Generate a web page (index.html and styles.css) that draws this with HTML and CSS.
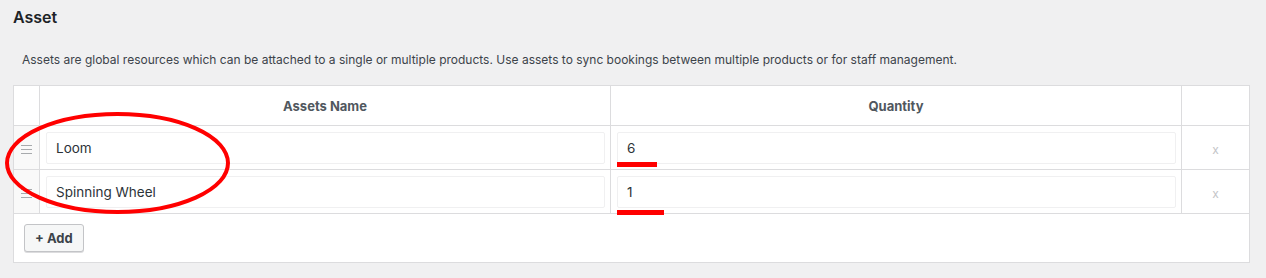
FILE: index.html
```html
<!DOCTYPE html>
<html lang="en">
<head>
  <meta charset="UTF-8">
  <title>Asset</title>
  <link rel="stylesheet" href="styles.css">
</head>
<body>
  <div class="wrap">
    <h2 class="title">Asset</h2>
    <p class="desc">Assets are global resources which can be attached to a single or multiple products. Use assets to sync bookings between multiple products or for staff management.</p>

    <div class="assets">
      <table class="asset-table">
        <thead>
          <tr>
            <th class="col-handle"></th>
            <th class="col-name">Assets Name</th>
            <th class="col-qty">Quantity</th>
            <th class="col-remove"></th>
          </tr>
        </thead>
        <tbody>
          <tr>
            <td class="col-handle"><span class="handle"></span></td>
            <td class="col-name"><input type="text" value="Loom"></td>
            <td class="col-qty"><input type="text" value="6"><span class="mark mark-1"></span></td>
            <td class="col-remove"><a href="#" class="remove">x</a></td>
          </tr>
          <tr>
            <td class="col-handle"><span class="handle"></span></td>
            <td class="col-name"><input type="text" value="Spinning Wheel"></td>
            <td class="col-qty"><input type="text" value="1"><span class="mark mark-2"></span></td>
            <td class="col-remove"><a href="#" class="remove">x</a></td>
          </tr>
        </tbody>
        <tfoot>
          <tr>
            <td colspan="4"><button type="button" class="btn-add">+ Add</button></td>
          </tr>
        </tfoot>
      </table>
      <!-- annotation circled around the names -->
      <svg class="circle" width="240" height="112" viewBox="0 0 240 112">
        <ellipse cx="112.5" cy="53" rx="110.5" ry="49" fill="none" stroke="#f00" stroke-width="4"/>
      </svg>
    </div>
  </div>
</body>
</html>
```

FILE: styles.css
```css
body {
  margin: 0;
  background: #f0f0f1;
  font-family: Inter, "Liberation Sans", Arial, sans-serif;
  color: #3c434a;
}
.wrap {
  padding: 0 16px 0 13px;
}
.title {
  margin: 0;
  padding-top: 7px;
  font-size: 16px;
  line-height: 20px;
  font-weight: 600;
  color: #1d2327;
}
.desc {
  margin: 24px 0 0 9px;
  font-size: 12px;
  line-height: 18px;
  color: #3c434a;
}
.assets {
  position: relative;
  margin-top: 16px;
}
.asset-table {
  width: 100%;
  border-collapse: collapse;
  background: #fff;
  border: 1px solid #dcdcde;
}
.asset-table th {
  height: 38px;
  padding: 1px 0 0;
  font-size: 13px;
  font-weight: 700;
  color: #50575e;
  text-align: center;
  border: 1px solid #dcdcde;
}
.asset-table td {
  padding: 6px 5px 5px 6px;
  height: 32px;
  border: 1px solid #dcdcde;
}
.asset-table .col-handle {
  width: 25px;
  background: #f9f9f9;
  text-align: center;
  padding: 0;
}
.asset-table th.col-handle {
  background: #fff;
}
.asset-table .col-remove {
  width: 67px;
  padding: 0;
  text-align: center;
}
.asset-table .col-name {
  width: 559px;
}
.asset-table td.col-qty {
  position: relative;
}
.handle {
  display: inline-block;
  width: 11px;
  height: 7px;
  border-top: 1px solid #a7aaad;
  border-bottom: 1px solid #a7aaad;
  position: relative;
  vertical-align: middle;
}
.handle::after {
  content: "";
  position: absolute;
  left: 0;
  right: 0;
  top: 3px;
  border-top: 1px solid #a7aaad;
}
.asset-table input {
  box-sizing: border-box;
  width: 100%;
  height: 32px;
  padding: 0 9px;
  border: 1px solid #f0f0f1;
  border-radius: 2px;
  font-family: inherit;
  font-size: 13.5px;
  color: #2c3338;
  background: #fff;
  outline: none;
}
.remove {
  color: #c3c4c7;
  font-size: 12px;
  text-decoration: none;
}
.asset-table tfoot td {
  height: 48px;
  padding: 0 0 0 10px;
}
.btn-add {
  height: 28px;
  padding: 0 10px;
  border: 1px solid #c3c4c7;
  border-radius: 3px;
  background: #f6f7f7;
  font-family: inherit;
  font-size: 13px;
  font-weight: 700;
  color: #3c434a;
  box-shadow: 0 1px 0 #dcdcde;
}
.mark {
  position: absolute;
  left: 6px;
  height: 5px;
  background: #f00;
}
.mark-1 {
  bottom: 2px;
  width: 40px;
}
.mark-2 {
  bottom: -2px;
  width: 47px;
}
.circle {
  position: absolute;
  left: -8px;
  top: 25px;
}
```
